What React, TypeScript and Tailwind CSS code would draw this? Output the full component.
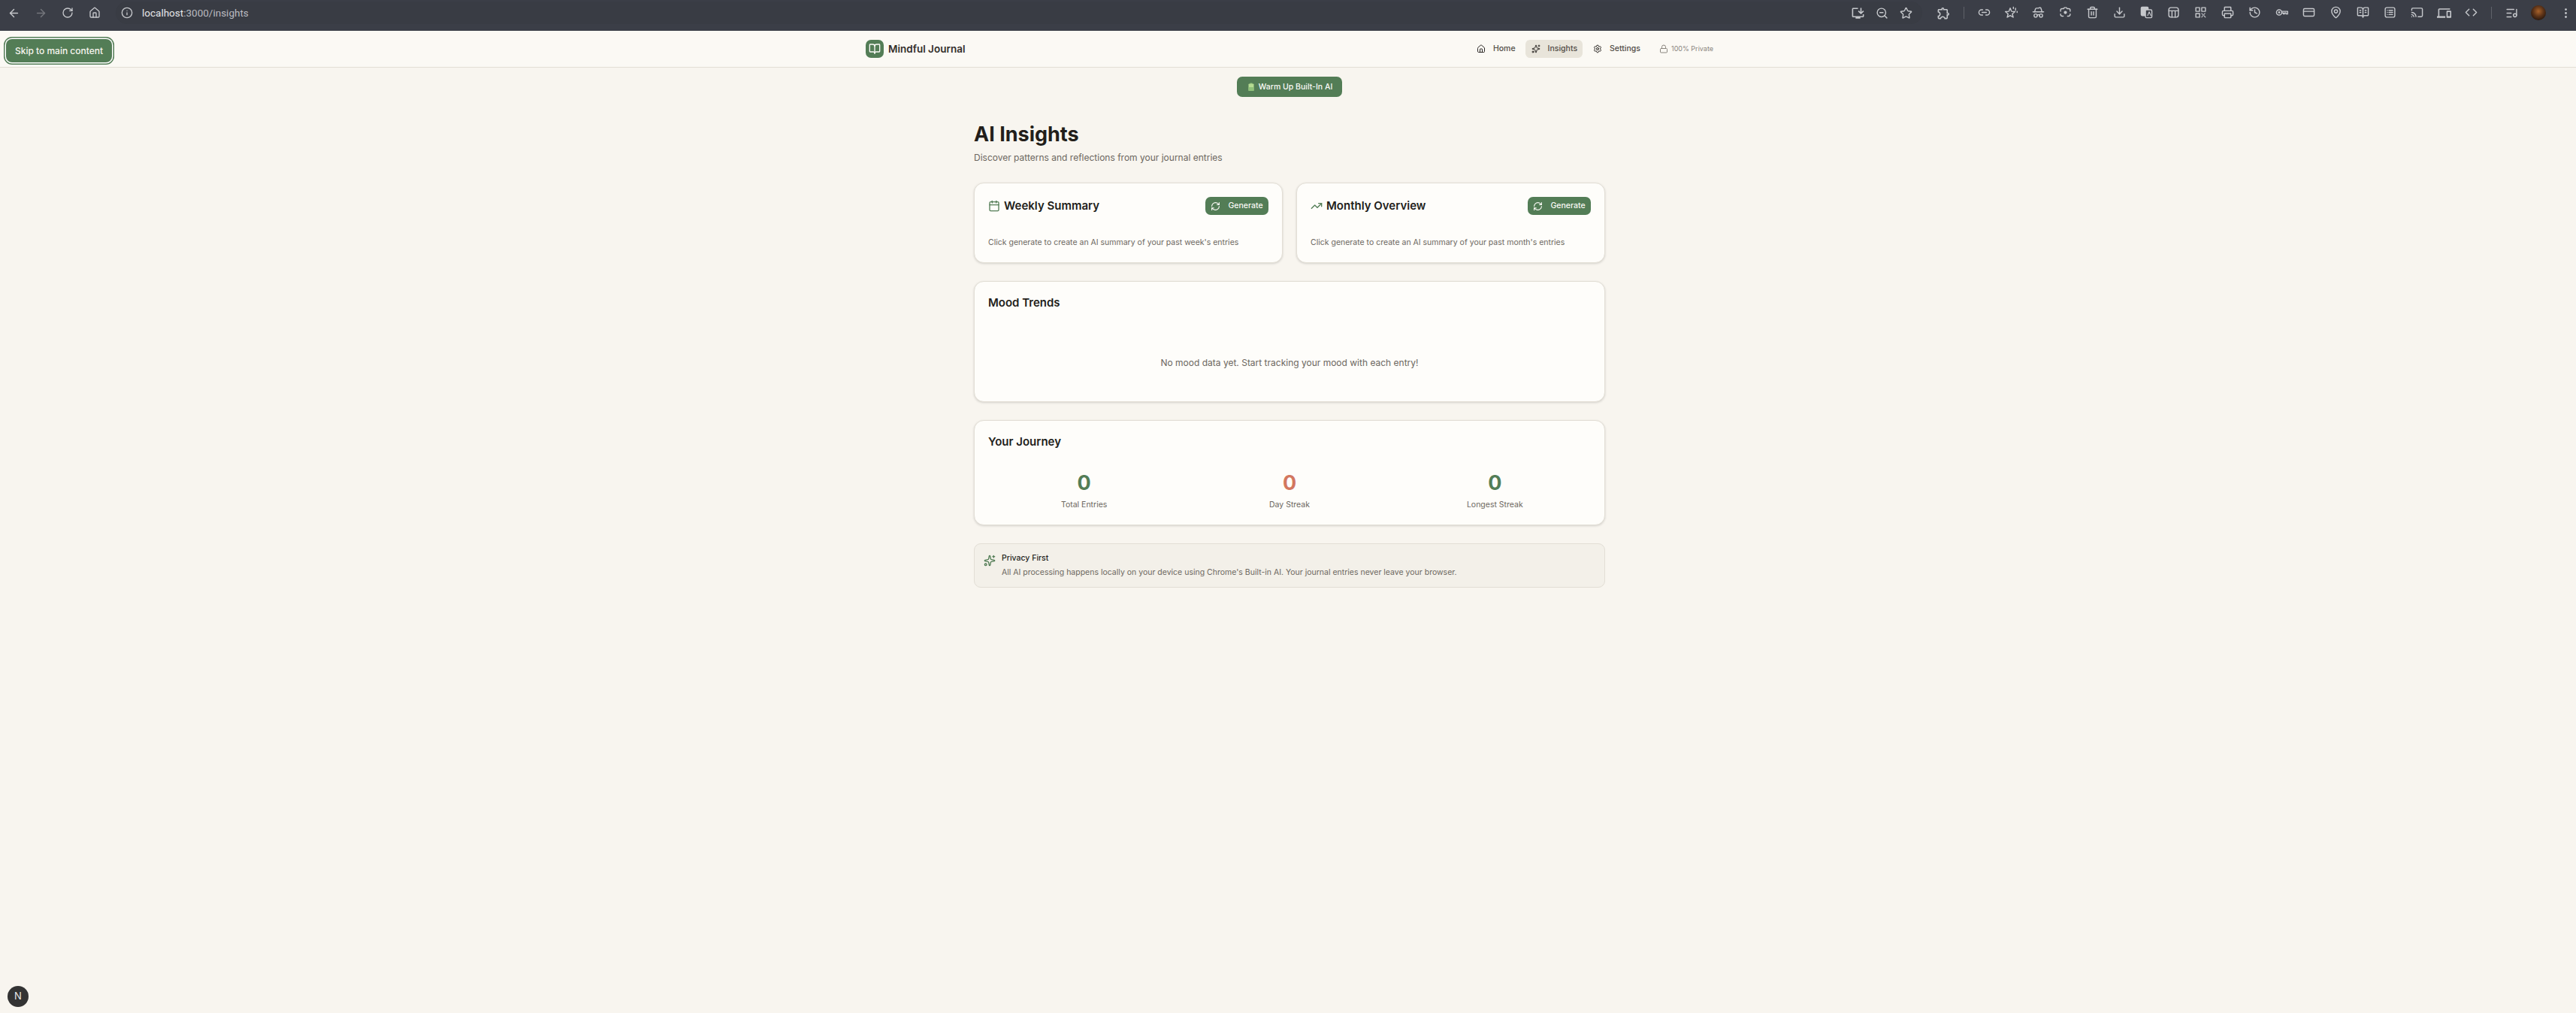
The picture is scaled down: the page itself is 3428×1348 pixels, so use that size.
import { ArrowLeft, ArrowRight, RotateCw, Home, Info, ZoomOut, Star, Link2, Sparkles, BookOpen, Settings, Lock, Calendar, TrendingUp, RefreshCw, Trash2, Download, Printer, History, CreditCard, MapPin, BookOpenText, Cast, Code, ListMusic, EllipsisVertical, HatGlasses } from 'lucide-react';
import { MdOutlineDevices, MdOutlineExtension, MdOutlineInstallDesktop } from 'react-icons/md';

type IconProps = { size?: number; className?: string };

function Glyph({ size = 17, children }: IconProps & { children: React.ReactNode }) {
  return (
    <svg width={size} height={size} viewBox="0 0 24 24" fill="none" stroke="currentColor" strokeWidth="2" strokeLinecap="round" strokeLinejoin="round">
      {children}
    </svg>
  );
}

const StarSpark = (p: IconProps) => (
  <Glyph {...p}>
    <path d="M10 4l2.4 6 6.6.5-5 4.3 1.6 6.4L10 17.7l-5.6 3.5 1.6-6.4-5-4.3 6.6-.5z" />
    <path d="M16 2v3M20 4v4M23 10v2" />
  </Glyph>
);
const LensIcon = (p: IconProps) => (
  <Glyph {...p}>
    <path d="M8 5H6a3 3 0 0 0-3 3v2M3 15v1a3 3 0 0 0 3 3h2M16 19h2a3 3 0 0 0 3-3v-1M21 10V8a3 3 0 0 0-3-3h-2M9 5l1-2h4l1 2" />
    <circle cx="12" cy="12" r="2" fill="currentColor" />
  </Glyph>
);
const TranslateIcon = (p: IconProps) => (
  <Glyph {...p}>
    <rect x="2" y="2" width="13" height="16" rx="2" fill="currentColor" />
    <rect x="10" y="7" width="12" height="15" rx="2" fill="#3b3e47" />
    <path d="M14 18l3-7 3 7" strokeWidth="1.5" />
  </Glyph>
);
const TableIcon = (p: IconProps) => (
  <Glyph {...p}>
    <rect x="3" y="3" width="18" height="18" rx="4" />
    <path d="M3 9h18M9 9v12M15 9v12" />
  </Glyph>
);
const QrIcon = (p: IconProps) => (
  <Glyph {...p}>
    <rect x="3" y="3" width="7" height="7" />
    <rect x="14" y="3" width="7" height="7" />
    <rect x="3" y="14" width="7" height="7" />
    <path d="M14 14l2 2M20 14l-2 2M16 18l-2 3M18 18l3 3" strokeWidth="1.5" />
  </Glyph>
);
const KeyIcon = (p: IconProps) => (
  <Glyph {...p}>
    <circle cx="7" cy="12" r="5" />
    <circle cx="7" cy="12" r="1" fill="currentColor" />
    <path d="M12 10h11v5h-3v-2h-3v2h-2v-2h-3" />
  </Glyph>
);
const ReaderIcon = (p: IconProps) => (
  <Glyph {...p}>
    <rect x="3" y="3" width="18" height="18" rx="3" />
    <path d="M10 8h7M10 12h7M10 16h7M7 8h.01M7 12h.01M7 16h.01" />
  </Glyph>
);

function ChromeBar() {
  const tools = [Link2, StarSpark, HatGlasses, LensIcon, Trash2, Download, TranslateIcon, TableIcon, QrIcon, Printer, History, KeyIcon, CreditCard, MapPin, BookOpenText, ReaderIcon, Cast];
  return (
    <div className="h-[41px] shrink-0 bg-[#3b3e47] flex items-center pb-[7px] text-[#c6c8cc]">
      <span className="w-[36px] flex justify-center"><ArrowLeft size={17} /></span>
      <span className="w-[36px] flex justify-center text-[#74767c]"><ArrowRight size={17} /></span>
      <span className="w-[36px] flex justify-center"><RotateCw size={16} /></span>
      <span className="w-[36px] flex justify-center"><Home size={16} /></span>

      {/* omnibox */}
      <div className="ml-[10px] flex-1 h-[30px] rounded-full bg-[#393c44] flex items-center pl-[7px] pr-[6px]">
        <Info size={16} />
        <span className="ml-[12px] text-[13.5px] font-['Roboto',sans-serif] text-[#e6e7e9]">
          localhost<span className="text-[#b9bbc0]">:3000/insights</span>
        </span>
        <span className="ml-auto w-[32px] flex justify-center"><MdOutlineInstallDesktop size={19} /></span>
        <span className="w-[32px] flex justify-center"><ZoomOut size={17} /></span>
        <span className="w-[32px] flex justify-center"><Star size={17} /></span>
      </div>

      <span className="ml-[10px] w-[36px] flex justify-center"><MdOutlineExtension size={19} /></span>
      <span className="ml-[9px] w-px h-[16px] bg-[#5f6269]" />
      <div className="ml-[8px] flex">
        {tools.map((Icon, i) => (
          <span key={i} className="w-[36px] flex justify-center"><Icon size={17} /></span>
        ))}
        <span className="w-[36px] flex justify-center"><MdOutlineDevices size={19} /></span>
        <span className="w-[36px] flex justify-center"><Code size={17} /></span>
      </div>
      <span className="ml-[9px] w-px h-[16px] bg-[#5f6269]" />
      <span className="ml-[8px] w-[36px] flex justify-center"><ListMusic size={17} /></span>
      <span className="w-[36px] flex justify-center">
        <span className="w-[20px] h-[20px] rounded-full bg-[radial-gradient(circle_at_50%_40%,#a8622a_0%,#5a3218_45%,#1e120c_85%)]" />
      </span>
      <span className="w-[32px] pl-[4px] flex justify-center"><EllipsisVertical size={17} /></span>
    </div>
  );
}

function NavItem({ icon: Icon, label, active }: { icon: typeof Home; label: string; active?: boolean }) {
  return (
    <div className={`h-[24px] flex items-center gap-[10px] pl-[8px] pr-[7px] rounded-[6px] text-[10.5px] font-medium text-[#524d47] ${active ? 'bg-[#e8e4da]' : ''}`}>
      <Icon size={12} className="text-[#2b2724]" />
      {label}
    </div>
  );
}

function GenerateButton() {
  return (
    <button className="h-[24px] w-[84px] flex items-center justify-center gap-[10px] rounded-[7px] bg-[#537d56] text-[10.5px] font-medium text-[#fbfaf6]">
      <RefreshCw size={13} />
      Generate
    </button>
  );
}

function SummaryCard({ icon: Icon, title, text }: { icon: typeof Home; title: string; text: string }) {
  return (
    <div className="h-[107px] rounded-[13px] border border-[#e2ded5] bg-[#fefdfa] shadow-[0_1px_3px_rgba(0,0,0,0.15)] px-[18px] pt-[18px]">
      <div className="flex items-center justify-between">
        <div className="flex items-center gap-[5px]">
          <Icon size={16} className="text-[#537d56]" />
          <h2 className="text-[15px] font-semibold text-[#221e1a]">{title}</h2>
        </div>
        <GenerateButton />
      </div>
      <p className="mt-[29px] text-[10.5px] leading-[16px] text-[#6c6760]">{text}</p>
    </div>
  );
}

function Stat({ value, label, color }: { value: string; label: string; color: string }) {
  return (
    <div className="flex flex-col items-center">
      <span className={`text-[27px] leading-[36px] font-bold ${color}`}>{value}</span>
      <span className="mt-[3px] text-[10.5px] leading-[16px] text-[#6c6760]">{label}</span>
    </div>
  );
}

export default function App() {
  return (
    <div className="relative w-full h-[1348px] flex flex-col bg-[#f8f5ef] font-['Inter','Liberation_Sans',sans-serif]">
      <ChromeBar />

      {/* skip link sits over the header while focused */}
      <button className="absolute left-[8px] top-[52px] h-[31px] w-[141px] rounded-[8px] bg-[#537d56] text-[12px] font-medium text-[#f8f6f0] shadow-[0_0_0_1.5px_#ffffff,0_0_0_3px_#537d56]">
        Skip to main content
      </button>

      <header className="h-[49px] shrink-0 flex justify-center pl-[4px] bg-[#fbf9f4] border-b border-[#e2ded5]">
        <div className="w-[1128px] flex items-center justify-between">
          <div className="flex items-center gap-[6px]">
            <div className="w-[24px] h-[24px] rounded-[7px] bg-[#537d56] flex items-center justify-center">
              <BookOpen size={16} className="text-[#fbfaf6]" />
            </div>
            <span className="text-[13.5px] font-semibold text-[#332e2a]">Mindful Journal</span>
          </div>
          <nav className="flex items-center gap-[6px]">
            <NavItem icon={Home} label="Home" />
            <NavItem icon={Sparkles} label="Insights" active />
            <NavItem icon={Settings} label="Settings" />
            <div className="ml-[12px] flex items-center gap-[4px] text-[9px] text-[#8a857e]">
              <Lock size={12} />
              100% Private
            </div>
          </nav>
        </div>
      </header>

      <div className="flex justify-center pl-[4px]">
        <main className="w-[840px] flex flex-col">
          <div className="flex justify-center mt-[12px] h-[27px]">
            <button className="w-[140px] h-[27px] rounded-[7px] bg-[#537d56] flex items-center justify-center gap-[4px] text-[10.5px] font-medium text-[#fbfaf6]">
              <svg width="12" height="12" viewBox="0 0 12 12">
                <rect x="4.5" y="0.5" width="3" height="1.5" fill="#8fc27a" />
                <rect x="2.5" y="1.5" width="7" height="9.5" rx="0.8" fill="#b5dc92" />
                <rect x="2.5" y="6" width="7" height="5" rx="0.8" fill="#8fc27a" />
              </svg>
              Warm Up Built-In AI
            </button>
          </div>

          <h1 className="mt-[32px] text-[27px] leading-[36px] font-bold text-[#221e1a]">AI Insights</h1>
          <p className="mt-[3px] text-[12px] leading-[20px] text-[#6c6760]">Discover patterns and reflections from your journal entries</p>

          <div className="mt-[23px] grid grid-cols-2 gap-[18px]">
            <SummaryCard icon={Calendar} title="Weekly Summary" text="Click generate to create an AI summary of your past week's entries" />
            <SummaryCard icon={TrendingUp} title="Monthly Overview" text="Click generate to create an AI summary of your past month's entries" />
          </div>

          <section className="mt-[24px] h-[161px] rounded-[13px] border border-[#e2ded5] bg-[#fefdfa] shadow-[0_1px_3px_rgba(0,0,0,0.15)] px-[18px] pt-[18px]">
            <h2 className="text-[15px] leading-[20px] font-semibold text-[#221e1a]">Mood Trends</h2>
            <p className="mt-[60px] text-center text-[12px] leading-[20px] text-[#6c6760]">No mood data yet. Start tracking your mood with each entry!</p>
          </section>

          <section className="mt-[24px] h-[140px] rounded-[13px] border border-[#e2ded5] bg-[#fefdfa] shadow-[0_1px_3px_rgba(0,0,0,0.15)] px-[18px] pt-[18px]">
            <h2 className="text-[15px] leading-[20px] font-semibold text-[#221e1a]">Your Journey</h2>
            <div className="mt-[27px] grid grid-cols-3 gap-[18px]">
              <Stat value="0" label="Total Entries" color="text-[#537d56]" />
              <Stat value="0" label="Day Streak" color="text-[#d3775f]" />
              <Stat value="0" label="Longest Streak" color="text-[#537d56]" />
            </div>
          </section>

          <section className="mt-[24px] h-[59px] rounded-[9px] border border-[#e2ded5] bg-[#f3f0e9] flex gap-[8px] pl-[12px] pt-[11px]">
            <Sparkles size={16} className="mt-[3px] text-[#537d56]" />
            <div>
              <h3 className="text-[10.5px] leading-[16px] font-medium text-[#221e1a]">Privacy First</h3>
              <p className="mt-[3px] text-[10.5px] leading-[16px] text-[#6c6760]">All AI processing happens locally on your device using Chrome's Built-in AI. Your journal entries never leave your browser.</p>
            </div>
          </section>
        </main>
      </div>

      {/* dev indicator */}
      <div className="absolute left-[10px] bottom-[8px] w-[28px] h-[28px] rounded-full bg-[#333333] flex items-center justify-center text-[13px] text-[#e8e8e8]">
        N
      </div>
    </div>
  );
}
